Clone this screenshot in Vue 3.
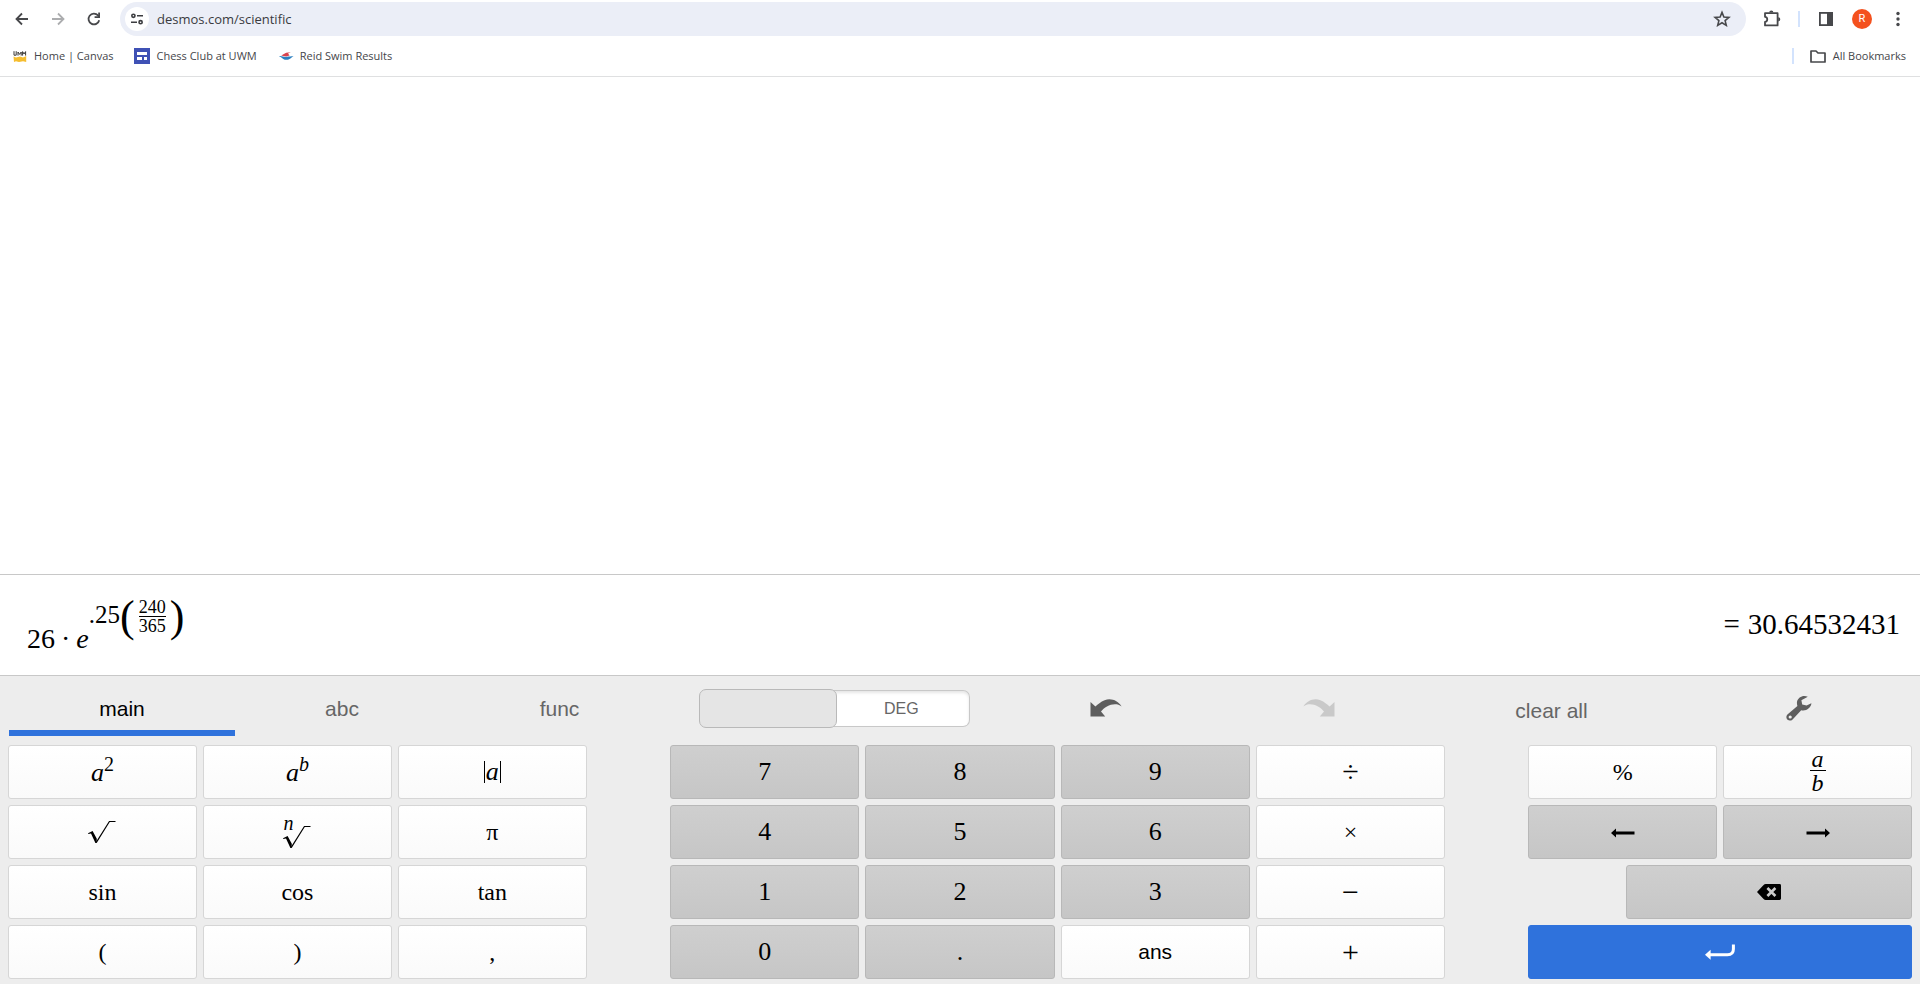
<script setup>
import { ref } from 'vue'

const address = ref('desmos.com/scientific')

const tabs = [
  { label: 'main', active: true },
  { label: 'abc', active: false },
  { label: 'func', active: false },
]

const functionKeys = [
  { kind: 'power', base: 'a', sup: '2', label: 'a squared' },
  { kind: 'power', base: 'a', sup: 'b', italicSup: true, label: 'a to the b' },
  { kind: 'abs', label: 'absolute value' },
  { kind: 'sqrt', label: 'square root' },
  { kind: 'root', label: 'nth root' },
  { kind: 'text', text: 'π' },
  { kind: 'text', text: 'sin' },
  { kind: 'text', text: 'cos' },
  { kind: 'text', text: 'tan' },
  { kind: 'text', text: '(' },
  { kind: 'text', text: ')' },
  { kind: 'text', text: ',' },
]

const numberKeys = [
  { text: '7', type: 'digit' },
  { text: '8', type: 'digit' },
  { text: '9', type: 'digit' },
  { text: '÷', type: 'op' },
  { text: '4', type: 'digit' },
  { text: '5', type: 'digit' },
  { text: '6', type: 'digit' },
  { text: '×', type: 'times' },
  { text: '1', type: 'digit' },
  { text: '2', type: 'digit' },
  { text: '3', type: 'digit' },
  { text: '−', type: 'op' },
  { text: '0', type: 'digit' },
  { text: '.', type: 'digit' },
  { text: 'ans', type: 'word' },
  { text: '+', type: 'op' },
]
</script>

<template>
  <div class="window">
    <header class="browser">
      <div class="toolbar">
        <div class="nav">
          <button class="nav-btn" aria-label="Back">
            <svg width="16" height="16" viewBox="0 0 16 16"><path d="M14 8H3M8 2.5L2.5 8L8 13.5" fill="none" stroke="#47484b" stroke-width="1.8" /></svg>
          </button>
          <button class="nav-btn" aria-label="Forward" disabled>
            <svg width="16" height="16" viewBox="0 0 16 16"><path d="M2 8H13M8 2.5L13.5 8L8 13.5" fill="none" stroke="#acadaf" stroke-width="1.8" /></svg>
          </button>
          <button class="nav-btn" aria-label="Reload">
            <svg width="16" height="16" viewBox="0 0 16 16"><path d="M13.2 9.2A5.4 5.4 0 1 1 12 4.4L13.4 6" fill="none" stroke="#47484b" stroke-width="1.8" /><path d="M14 1.6V7H8.6V5.2H12.2V1.6Z" fill="#47484b" /></svg>
          </button>
        </div>
        <div class="omnibox">
          <button class="site-info" aria-label="View site information">
            <svg width="14" height="14" viewBox="0 0 14 14" fill="none" stroke="#3c3d40" stroke-width="1.6"><circle cx="3.4" cy="3.8" r="1.6" /><path d="M7 3.8H13M1 10.2H7" /><circle cx="10.6" cy="10.2" r="1.6" /></svg>
          </button>
          <input v-model="address" class="address" type="text" aria-label="Address" />
          <button class="star" aria-label="Bookmark this tab">
            <svg width="18" height="18" viewBox="0 0 18 18"><path d="M9 2.4L10.9 7L15.9 7.4L12.1 10.6L13.3 15.4L9 12.8L4.7 15.4L5.9 10.6L2.1 7.4L7.1 7Z" fill="none" stroke="#47484b" stroke-width="1.6" /></svg>
          </button>
        </div>
        <div class="actions">
          <button class="action" aria-label="Extensions">
            <svg width="20" height="20" viewBox="0 0 20 20"><path d="M3 4.2H15.6V16.4H3V12.8C6 12.8 6 7.8 3 7.8Z" fill="none" stroke="#47484b" stroke-width="1.8" stroke-linejoin="round" /><path d="M7.2 3.6A2.1 2.1 0 0 1 11.4 3.6ZM16.2 8.2A2.1 2.1 0 0 1 16.2 12.4Z" fill="#47484b" /></svg>
          </button>
          <span class="divider"></span>
          <button class="action" aria-label="Side panel">
            <svg width="16" height="16" viewBox="0 0 16 16"><rect x="1.9" y="1.9" width="12.2" height="12.2" fill="none" stroke="#47484b" stroke-width="1.8" /><path d="M9 2H14V14H9Z" fill="#47484b" /></svg>
          </button>
          <button class="avatar" aria-label="Profile">R</button>
          <button class="action menu" aria-label="Menu">
            <svg width="4" height="16" viewBox="0 0 4 16" fill="#47484b"><circle cx="2" cy="2.5" r="1.7" /><circle cx="2" cy="8" r="1.7" /><circle cx="2" cy="13.5" r="1.7" /></svg>
          </button>
        </div>
      </div>
      <nav class="bookmarks" aria-label="Bookmarks">
        <a href="#" class="bookmark">
          <svg width="16" height="16" viewBox="0 0 16 16"><path d="M1.5 8.5L4 9.4L8 8.6L11 9.4L14.2 8V14L11 13.2L7 14L4 13.2L2 14Z" fill="#f5bd2f" /><path d="M2 3.2V7.2H4.2V3.2M6 7.6V4L7.6 6.4L9.2 4V7.6M10.6 7.6V3.6L12 6L13.6 3.6V7.6" fill="none" stroke="#3a3836" stroke-width="1" /></svg>
          <span>Home | Canvas</span>
        </a>
        <a href="#" class="bookmark">
          <svg width="16" height="16" viewBox="0 0 16 16"><rect width="16" height="16" fill="#3f51b5" /><path d="M3 4H13V7H3ZM3 9H8V12H3ZM10 9H13V12H10Z" fill="#fff" /></svg>
          <span>Chess Club at UWM</span>
        </a>
        <a href="#" class="bookmark">
          <svg width="16" height="16" viewBox="0 0 16 16"><path d="M1 8.2C4 7.6 6 9.4 9 8.8C11 8.4 13 8.2 15.6 8.2C13 9.6 12 11.6 8.4 11.8C5 12 4.6 9.4 1 8.2Z" fill="#2b7fc0" /><path d="M3.2 7.4L8.2 4.8L12.8 4.2L10 5.6L11.6 7.6L8 8.4Z" fill="#d8434e" /></svg>
          <span>Reid Swim Results</span>
        </a>
        <span class="divider push"></span>
        <a href="#" class="bookmark all">
          <svg width="18" height="16" viewBox="0 0 18 16"><path d="M2 3H7L9 5H16V14H2Z" fill="none" stroke="#47484b" stroke-width="1.7" stroke-linejoin="round" /></svg>
          <span>All Bookmarks</span>
        </a>
      </nav>
    </header>

    <main class="calculator">
      <section class="history" aria-label="History"></section>

      <section class="entry" aria-label="Current expression">
        <div class="expression">
          <span class="base"><span>26</span><span class="cdot">·</span><i class="euler">e</i></span>
          <span class="exponent">
            <span class="exp-number">.25</span>
            <span class="paren">(</span>
            <span class="fraction"><span class="num">240</span><span class="den">365</span></span>
            <span class="paren">)</span>
          </span>
        </div>
        <output class="result"><span class="equals">=</span><span>30.64532431</span></output>
      </section>

      <section class="keypad" aria-label="Keypad">
        <div class="controls">
          <button v-for="tab in tabs" :key="tab.label" class="tab" :class="{ active: tab.active }">{{ tab.label }}</button>
          <div class="angle">
            <button class="mode selected" aria-label="Radians"></button>
            <button class="mode">DEG</button>
          </div>
          <button class="tool" aria-label="Undo">
            <svg width="32" height="20" viewBox="0 0 32 20"><path d="M0.5 4V18.5H15.2L11 13.6C15 8 25 3.4 31.6 8.4C28 2.6 21 -0.4 14.6 2.2C10.6 3.8 8 6.2 5.4 8.6Z" fill="#5e5e5e" /></svg>
          </button>
          <button class="tool" aria-label="Redo" disabled>
            <svg width="32" height="20" viewBox="0 0 32 20"><path d="M31.5 4V18.5H16.8L21 13.6C17 8 7 3.4 0.4 8.4C4 2.6 11 -0.4 17.4 2.2C21.4 3.8 24 6.2 26.6 8.6Z" fill="#c9c9c9" /></svg>
          </button>
          <button class="tool clear">clear all</button>
          <button class="tool" aria-label="Settings">
            <svg width="26" height="26" viewBox="0 0 26 26"><path fill-rule="evenodd" d="M21.8 1.8C17.6 -0.4 12 1.8 11 6.8C10.8 8.4 11 9.8 11.4 11L1.4 19.6C-0.2 21.2 0.2 23.6 1.6 24.8C3 26 5.2 25.8 6.6 24.4L15.2 15.2C20 16.4 25.2 12.8 25.4 8.2L20.6 10.6L16.2 9.4L15.4 5.2ZM4.2 20.4A1.6 1.6 0 1 1 4.2 23.6A1.6 1.6 0 1 1 4.2 20.4Z" fill="#5e5e5e" /></svg>
          </button>
        </div>

        <div class="keys">
          <div class="group functions">
            <button v-for="(key, i) in functionKeys" :key="i" class="key" :aria-label="key.label">
              <span v-if="key.kind === 'power'" class="power"><i>{{ key.base }}</i><sup :class="{ italic: key.italicSup }">{{ key.sup }}</sup></span>
              <span v-else-if="key.kind === 'abs'" class="abs"><i>a</i></span>
              <svg v-else-if="key.kind === 'sqrt'" width="28" height="24" viewBox="0 0 28 24"><path d="M0 13.2L4.6 11L8.8 18.8L8.6 23H7.4L3 13.4L0.4 14Z" fill="#000" /><path d="M8.2 22.6L21.4 1.5H27.5" fill="none" stroke="#000" stroke-width="1.2" /></svg>
              <span v-else-if="key.kind === 'root'" class="root">
                <i class="index">n</i>
                <svg width="28" height="24" viewBox="0 0 28 24"><path d="M0 13.2L4.6 11L8.8 18.8L8.6 23H7.4L3 13.4L0.4 14Z" fill="#000" /><path d="M8.2 22.6L21.4 1.5H27.5" fill="none" stroke="#000" stroke-width="1.2" /></svg>
              </span>
              <template v-else>{{ key.text }}</template>
            </button>
          </div>

          <div class="group numbers">
            <button v-for="key in numberKeys" :key="key.text" class="key" :class="[key.type, { dark: key.type === 'digit' }]">{{ key.text }}</button>
          </div>

          <div class="group commands">
            <button class="key half">%</button>
            <button class="key half" aria-label="fraction"><span class="key-fraction"><i>a</i><i>b</i></span></button>
            <button class="key half dark" aria-label="Left">
              <svg width="24" height="14" viewBox="0 0 24 14"><path d="M0 8L5 3.4V6.6H23.5V9.4H5V12.6Z" fill="#000" /></svg>
            </button>
            <button class="key half dark" aria-label="Right">
              <svg width="24" height="14" viewBox="0 0 24 14"><path d="M24 8L19 3.4V6.6H0.5V9.4H19V12.6Z" fill="#000" /></svg>
            </button>
            <button class="key dark backspace" aria-label="Backspace">
              <svg width="24" height="16" viewBox="0 0 24 16"><path d="M0 8L6.6 1Q7.4 0 8.8 0H22.6Q24 0 24 1.4V14.6Q24 16 22.6 16H8.8Q7.4 16 6.6 15Z" fill="#000" /><path d="M10.4 4L18.4 12M18.4 4L10.4 12" stroke="#cbcbcb" stroke-width="2.6" /></svg>
            </button>
            <button class="key enter" aria-label="Enter">
              <svg width="30" height="16" viewBox="0 0 30 16"><path d="M28.4 0.6V5Q28.4 10.8 22.4 10.8H4" fill="none" stroke="#fff" stroke-width="3" /><path d="M0 10.8L5.6 5.8V15.8Z" fill="#fff" /></svg>
            </button>
          </div>
        </div>
      </section>
    </main>
  </div>
</template>

<style>
body {
  margin: 0;
  background: #fff;
}
</style>

<style scoped>
* {
  box-sizing: border-box;
}

button,
input {
  margin: 0;
  padding: 0;
  border: 0;
  background: none;
  font: inherit;
  color: inherit;
}

svg {
  display: block;
  flex: none;
}

.window {
  display: flex;
  flex-direction: column;
  min-height: 100vh;
  font-family: "Open Sans", "Noto Sans", sans-serif;
}

.browser {
  border-bottom: 1px solid #dfe0e1;
}

.toolbar {
  display: flex;
  align-items: center;
  height: 38px;
  padding: 0 14px 0 4px;
}

.nav {
  display: flex;
  width: 116px;
}

.nav-btn {
  display: grid;
  place-items: center;
  width: 36px;
  height: 34px;
}

.omnibox {
  display: flex;
  flex: 1;
  align-items: center;
  height: 34px;
  padding: 0 15px 0 5px;
  border-radius: 17px;
  background: #ebeef7;
}

.site-info {
  display: grid;
  place-items: center;
  width: 24px;
  height: 24px;
  border-radius: 50%;
  background: #fff;
}

.address {
  flex: 1;
  min-width: 0;
  margin-left: 8px;
  outline: 0;
  font-size: 13px;
  color: #3a3b3f;
}

.actions {
  display: flex;
  align-items: center;
  margin-left: 16px;
}

.action {
  display: grid;
  place-items: center;
  min-width: 16px;
  height: 24px;
}

.divider {
  width: 2px;
  height: 16px;
  background: #d3e3fd;
}

.actions .divider {
  margin: 0 18px 0 16px;
}

.avatar {
  width: 20px;
  height: 20px;
  margin: 0 18px;
  border-radius: 50%;
  background: #f4511e;
  font-family: Roboto, sans-serif;
  font-size: 11px;
  line-height: 20px;
  color: #fff;
}

.bookmarks {
  display: flex;
  align-items: center;
  height: 38px;
  padding: 0 14px 2px 12px;
}

.bookmark {
  display: flex;
  align-items: center;
  gap: 6px;
  margin-right: 21px;
  font-size: 11px;
  line-height: 16px;
  color: #45464a;
  text-decoration: none;
}

.push {
  margin-left: auto;
}

.bookmark.all {
  margin: 0 0 0 15px;
}

.calculator {
  display: flex;
  flex: 1;
  flex-direction: column;
}

.history {
  flex: 1;
}

.entry {
  display: flex;
  align-items: center;
  justify-content: space-between;
  height: 102px;
  padding: 0 20px 0 27px;
  border-top: 1px solid #c8c8c8;
  border-bottom: 1px solid #c8c8c8;
  font-family: "Liberation Serif", serif;
  font-size: 28px;
  line-height: 32px;
  color: #000;
}

.expression {
  display: flex;
  align-items: flex-end;
}

.base {
  display: flex;
}

.cdot {
  margin: 0 6px;
}

.exponent {
  display: flex;
  align-items: center;
  height: 42px;
  margin-bottom: 17px;
}

.exp-number {
  padding-bottom: 4px;
  font-size: 25px;
}

.paren {
  font-size: 44px;
  line-height: 42px;
}

.fraction {
  display: flex;
  flex-direction: column;
  margin: 0 2px;
  padding: 0 2px;
  font-size: 18px;
  line-height: 18px;
}

.den {
  border-top: 1px solid #000;
}

.result {
  display: flex;
  gap: 8px;
  padding-bottom: 2px;
  font-size: 29px;
}

.keypad {
  padding-bottom: 5px;
  background: #ededed;
}

.controls {
  display: grid;
  grid-template-columns: 226fr 214fr 221fr 329fr 213fr 213fr 253fr 242fr;
  height: 60px;
  padding-left: 9px;
  font-family: "Liberation Sans", Arial, sans-serif;
  font-size: 21px;
  color: #666;
}

.tab {
  padding-top: 12px;
  border-bottom: 6px solid transparent;
}

.tab.active {
  border-bottom-color: #2f72dc;
  color: #000;
}

.angle {
  display: flex;
  align-items: center;
  justify-self: center;
  width: 271px;
  padding-top: 5px;
  font-size: 16px;
}

.mode {
  flex: 1;
  height: 37px;
  border: 1px solid #c8c8c8;
  border-left: 0;
  border-radius: 0 7px 7px 0;
  background: #fff;
  box-shadow: inset 0 2px 3px rgba(0, 0, 0, 0.1);
}

.mode.selected {
  height: 39px;
  margin-right: -3px;
  border: 1px solid #b9b9b9;
  border-radius: 7px;
  background: #e5e5e5;
  box-shadow: none;
  z-index: 1;
}

.tool {
  display: flex;
  align-items: center;
  justify-content: center;
  padding-top: 4px;
}

.tool.clear {
  padding-top: 10px;
}

.keys {
  display: flex;
  justify-content: space-between;
  margin-top: 9px;
  padding: 0 8px;
}

.group {
  display: grid;
  grid-auto-rows: 54px;
  gap: 6px;
}

.functions {
  grid-template-columns: repeat(3, 1fr);
  flex: 0 0 30.4%;
}

.numbers {
  grid-template-columns: repeat(4, 1fr);
  flex: 0 0 40.7%;
}

.commands {
  grid-template-columns: repeat(4, 1fr);
  flex: 0 0 20.15%;
}

.key {
  display: flex;
  align-items: center;
  justify-content: center;
  min-width: 0;
  border: 1px solid #d6d6d6;
  border-radius: 3px;
  background: linear-gradient(#fff, #fafafa);
  font-family: "Liberation Serif", serif;
  font-size: 24px;
  line-height: 28px;
  color: #000;
}

.dark {
  border-color: #b8b8b8;
  background: linear-gradient(#cfcfcf, #c6c6c6);
}

.digit {
  font-size: 26px;
}

.op {
  font-size: 30px;
}

.word {
  font-family: "Liberation Sans", Arial, sans-serif;
  font-size: 21px;
}

.power {
  padding-bottom: 4px;
  font-size: 26px;
}

.power sup {
  font-size: 20px;
  line-height: 1;
}

.italic {
  font-style: italic;
}

.abs {
  padding: 0 1px;
  border: solid #000;
  border-width: 0 1px;
  line-height: 22px;
  font-size: 26px;
}

.root {
  position: relative;
  padding-top: 10px;
}

.index {
  position: absolute;
  top: -2px;
  left: 0;
  font-size: 20px;
  line-height: 20px;
}

.half {
  grid-column: span 2;
}

.backspace {
  grid-column: 2 / -1;
}

.enter {
  grid-column: 1 / -1;
  border-color: #2f72dc;
  background: #2f72dc;
}

.key-fraction {
  display: flex;
  flex-direction: column;
  width: 16px;
  padding-bottom: 3px;
  line-height: 22px;
  text-align: center;
}

.key-fraction i + i {
  padding-top: 1px;
  border-top: 1px solid #000;
}
</style>
